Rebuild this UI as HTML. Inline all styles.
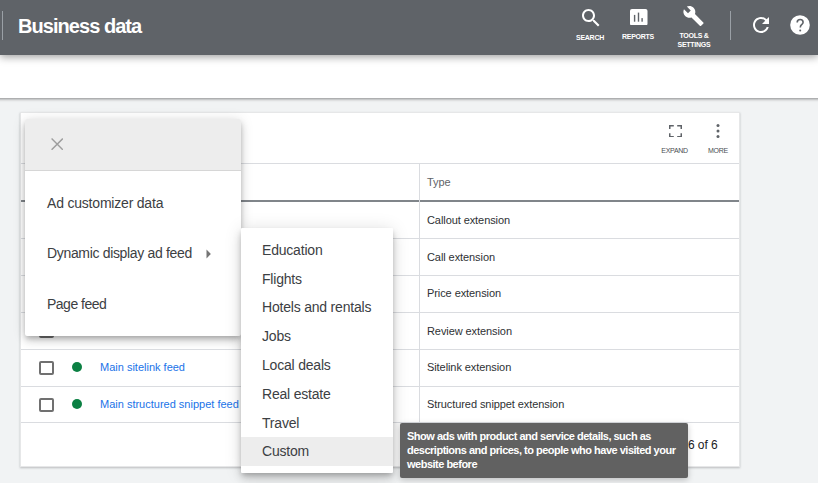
<!DOCTYPE html>
<html><head><meta charset="utf-8">
<style>
*{box-sizing:border-box;margin:0;padding:0}
html,body{width:818px;height:483px;overflow:hidden;background:#f1f3f4;font-family:"Liberation Sans",sans-serif;position:relative}
.abs{position:absolute}
svg{display:block}
#hdr{left:0;top:0;width:818px;height:55px;background:#5f6368;z-index:3;box-shadow:0 2px 8px rgba(0,0,0,.38)}
#hdr .vl{left:2px;top:11px;width:1px;height:29px;background:#9aa0a6}
#title{left:18px;top:14px;color:#fff;font-weight:bold;font-size:20px;line-height:24px;letter-spacing:-0.95px;white-space:nowrap}
.hl{color:#fff;font-weight:bold;font-size:7px;letter-spacing:-0.25px;text-align:center;white-space:nowrap;line-height:9px}
#bar{left:-10px;top:55px;width:840px;height:43px;background:#fff;z-index:2;box-shadow:0 1px 3px rgba(0,0,0,.45)}
#card{left:20px;top:112px;width:720px;height:355px;background:#fff;border:1px solid #e6e7e8;box-shadow:0 1px 2px rgba(60,64,67,.3)}
.row{left:0;width:718px;border-top:1px solid #dadce0}
.t12{font-size:11px;color:#2e3134;white-space:nowrap;line-height:13px;letter-spacing:-0.08px}
.cb{width:15px;height:14px;border:2px solid #707070;border-radius:2px}
.dot{width:10.6px;height:10.6px;border-radius:50%;background:#0b8043}
.lnk{font-size:11px;color:#1a73e8;white-space:nowrap;line-height:13px}
#menu{left:25px;top:119px;width:216px;height:217px;background:#fff;border-radius:2px;box-shadow:0 3px 5px -1px rgba(0,0,0,.2),0 5px 8px 0 rgba(0,0,0,.14),0 1px 14px 0 rgba(0,0,0,.12);z-index:5;overflow:hidden}
#menu .mh{left:0;top:0;width:216px;height:52px;background:#ededed;border-bottom:1px solid #d6d6d6}
.mi{font-size:14px;color:#3c4043;white-space:nowrap;line-height:16px;letter-spacing:-0.2px}
#sub{left:241px;top:228px;width:152px;height:245px;background:#fff;box-shadow:0 3px 5px -1px rgba(0,0,0,.2),0 6px 10px 0 rgba(0,0,0,.14),0 1px 18px 0 rgba(0,0,0,.12);z-index:6;border-radius:1px}
#tip{left:400px;top:423px;width:288px;height:55px;background:#616161;border-radius:2px;z-index:7;box-shadow:0 2px 6px rgba(0,0,0,.22);color:#fff;font-weight:bold;font-size:11px;line-height:13.8px;padding:7px 0 0 7px;white-space:nowrap;letter-spacing:-0.5px}
</style></head><body>
<div id="hdr" class="abs">
  <div class="abs vl"></div>
  <div id="title" class="abs">Business data</div>
  <svg class="abs" style="left:578.5px;top:6px" width="24" height="24" viewBox="0 0 24 24"><path fill="#fff" d="M15.5 14h-.79l-.28-.27C15.410 12.59 16 11.11 16 9.5 16 5.91 13.09 3 9.5 3S3 5.91 3 9.5 5.91 16 9.5 16c1.61 0 3.09-.59 4.230-1.57l.27.28v.79l5 4.99L20.49 19l-4.99-5zm-6 0C7.01 14 5 11.99 5 9.5S7.01 5 9.5 5 14 7.01 14 9.5 11.99 14 9.5 14z"/></svg>
  <div class="abs hl" style="left:570px;top:33px;width:40px">SEARCH</div>
  <svg class="abs" style="left:630px;top:8.6px" width="17.5" height="16.5" viewBox="0 0 17.5 16.5"><rect x="0" y="0" width="17.5" height="16.5" rx="2" fill="#fff"/><rect x="3.9" y="5.9" width="1.4" height="6.8" fill="#5f6368"/><rect x="7.8" y="3.6" width="1.4" height="9.1" fill="#5f6368"/><rect x="11.4" y="9.1" width="1.4" height="3.6" fill="#5f6368"/></svg>
  <div class="abs hl" style="left:618px;top:32px;width:40px">REPORTS</div>
  <svg class="abs" style="left:682px;top:5px" width="23" height="22" viewBox="0 0 24 24"><path fill="#fff" d="M22.7 19l-9.1-9.1c.9-2.3.4-5-1.5-6.9-2-2-5-2.4-7.4-1.3L9 6 6 9 1.6 4.7C.4 7.1.9 10.1 2.9 12.1c1.9 1.9 4.6 2.4 6.9 1.5l9.1 9.1c.4.4 1 .4 1.4 0l2.3-2.3c.5-.4.5-1.1.1-1.4z"/></svg>
  <div class="abs hl" style="left:670px;top:31px;width:48px">TOOLS &amp;<br>SETTINGS</div>
  <div class="abs" style="left:730px;top:11px;width:1px;height:29px;background:#9aa0a6"></div>
  <svg class="abs" style="left:748.5px;top:13px" width="24" height="24" viewBox="0 0 24 24"><path fill="#fff" d="M17.65 6.35C16.2 4.9 14.21 4 12 4c-4.42 0-7.99 3.58-7.99 8s3.570 8 7.99 8c3.73 0 6.84-2.55 7.73-6h-2.08c-.82 2.33-3.04 4-5.65 4-3.31 0-6-2.69-6-6s2.69-6 6-6c1.66 0 3.14.69 4.22 1.78L13 11h7V4l-2.35 2.35z"/></svg>
  <svg class="abs" style="left:790px;top:14.8px" width="20" height="20" viewBox="0 0 20 20"><circle cx="10" cy="10" r="9.8" fill="#fff"/><path d="M7.2 7.4C7.2 5.5 8.5 4.5 10.2 4.5C11.9 4.5 13.1 5.6 13.1 7.2C13.1 8.4 12.4 9 11.6 9.7C10.8 10.4 10.3 11 10.3 12.4" fill="none" stroke="#5f6368" stroke-width="1.6"/><circle cx="10.2" cy="15.4" r="1" fill="#5f6368"/></svg>
</div>
<div id="bar" class="abs"></div>

<div id="card" class="abs">
  <svg class="abs" style="left:648px;top:11.8px" width="13" height="12.4" viewBox="0 0 13 12.4" fill="none" stroke="#5f6368" stroke-width="1.5"><path d="M0.75 4.1V0.75H4.8M8.2 0.75H12.25V4.1M12.25 8.3V11.65H8.2M4.8 11.65H0.75V8.3"/></svg>
  <div class="abs" style="left:628.6px;top:34px;width:50px;text-align:center;font-size:7px;color:#4a4e52;letter-spacing:-0.3px">EXPAND</div>
  <svg class="abs" style="left:693px;top:10px" width="8" height="16" viewBox="0 0 8 16"><circle cx="4" cy="2.4" r="1.5" fill="#5f6368"/><circle cx="4" cy="7.9" r="1.5" fill="#5f6368"/><circle cx="4" cy="13.4" r="1.5" fill="#5f6368"/></svg>
  <div class="abs" style="left:677px;top:34px;width:40px;text-align:center;font-size:7px;color:#4a4e52;letter-spacing:-0.3px">MORE</div>

  <div class="abs row" style="top:50px;height:39px;border-bottom:2px solid #80858a"></div>
  <div class="abs" style="left:398px;top:50px;width:1px;height:259px;background:#dadce0"></div>
  <div class="abs t12" style="left:406px;top:63px;color:#5f6368">Type</div>
  <div class="abs row" style="top:125px"></div>
  <div class="abs row" style="top:162px"></div>
  <div class="abs row" style="top:199px"></div>
  <div class="abs row" style="top:236px"></div>
  <div class="abs row" style="top:273px"></div>
  <div class="abs row" style="top:309px"></div>
  <div class="abs t12" style="left:406px;top:101px">Callout extension</div>
  <div class="abs t12" style="left:406px;top:138px">Call extension</div>
  <div class="abs t12" style="left:406px;top:174px">Price extension</div>
  <div class="abs t12" style="left:406px;top:212px">Review extension</div>
  <div class="abs t12" style="left:406px;top:248px">Sitelink extension</div>
  <div class="abs t12" style="left:406px;top:284.8px">Structured snippet extension</div>

  <div class="abs cb" style="left:18px;top:248px"></div>
  <div class="abs dot" style="left:50.6px;top:248.8px"></div>
  <div class="abs lnk" style="left:79px;top:248px">Main sitelink feed</div>
  <div class="abs cb" style="left:18px;top:284.5px"></div>
  <div class="abs dot" style="left:50.6px;top:285.6px"></div>
  <div class="abs lnk" style="left:79px;top:285px">Main structured snippet feed</div>
  <div class="abs cb" style="left:18px;top:211px"></div>

  <div class="abs t12" style="left:667px;top:325px;font-size:12px;line-height:14px;color:#202124">6 of 6</div>
</div>

<div id="menu" class="abs">
  <div class="abs mh"></div>
  <svg class="abs" style="left:26px;top:18.6px" width="12.4" height="12.4" viewBox="0 0 12.4 12.4"><path d="M0.6 0.6L11.8 11.8M11.8 0.6L0.6 11.8" stroke="#9e9e9e" stroke-width="1.4"/></svg>
  <div class="abs mi" style="left:22px;top:76px">Ad customizer data</div>
  <div class="abs mi" style="left:22px;top:126px;letter-spacing:-0.33px">Dynamic display ad feed</div>
  <svg class="abs" style="left:180.5px;top:129.6px" width="6" height="10" viewBox="0 0 6 10"><path d="M0.5 0.4l4.4 4.5-4.4 4.5z" fill="#757575"/></svg>
  <div class="abs mi" style="left:22px;top:177px;letter-spacing:-0.5px">Page feed</div>
</div>

<div id="sub" class="abs">
  <div class="abs" style="left:0;top:209px;width:152px;height:29px;background:#ededed"></div>
  <div class="abs mi" style="left:21px;top:14px">Education</div>
  <div class="abs mi" style="left:21px;top:43px">Flights</div>
  <div class="abs mi" style="left:21px;top:71px">Hotels and rentals</div>
  <div class="abs mi" style="left:21px;top:100px">Jobs</div>
  <div class="abs mi" style="left:21px;top:129px">Local deals</div>
  <div class="abs mi" style="left:21px;top:158px">Real estate</div>
  <div class="abs mi" style="left:21px;top:187px">Travel</div>
  <div class="abs mi" style="left:21px;top:215px">Custom</div>
</div>

<div id="tip" class="abs">Show ads with product and service details, such as<br>descriptions and prices, to people who have visited your<br>website before</div>
</body></html>
